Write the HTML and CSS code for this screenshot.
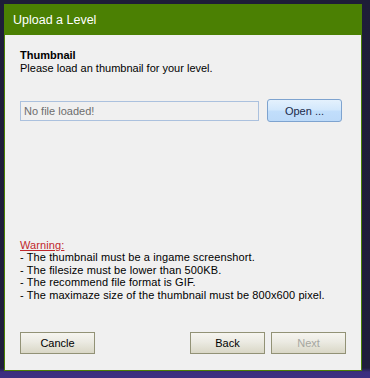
FILE: index.html
```html
<!DOCTYPE html>
<html>
<head>
<meta charset="utf-8">
<link rel="stylesheet" href="styles.css">
</head>
<body>
<div class="window">
  <div class="titlebar">Upload a Level</div>
  <div class="content">
    <div class="heading">Thumbnail</div>
    <div class="desc">Please load an thumbnail for your level.</div>
    <div class="filerow">
      <div class="filebox">No file loaded!</div>
      <button class="open-btn">Open ...</button>
    </div>
    <div class="warning">
      <div class="warn-title">Warning:</div>
      <div>- The thumbnail must be a ingame screenshort.</div>
      <div>- The filesize must be lower than 500KB.</div>
      <div>- The recommend file format is GIF.</div>
      <div>- The maximaze size of the thumbnail must be 800x600 pixel.</div>
    </div>
    <div class="buttons">
      <button class="btn">Cancle</button>
      <div class="spacer"></div>
      <button class="btn">Back</button>
      <button class="btn disabled">Next</button>
    </div>
  </div>
</div>
</body>
</html>
```

FILE: styles.css
```css
html, body {
  margin: 0;
  padding: 0;
}
body {
  width: 370px;
  height: 378px;
  overflow: hidden;
  background: linear-gradient(to bottom, #1e1d38 0px, #1f1e3b 368px, #3b2e7e 372px, #3d2f82 378px);
  font-family: "Liberation Sans", Arial, sans-serif;
  font-size: 11px;
  color: #000;
}
.window {
  margin: 4px 0 0 4px;
  width: 356px;
  height: 365px;
  border: 1px solid #4b8003;
  background: #f0f0f0;
  display: flex;
  flex-direction: column;
}
.titlebar {
  height: 30px;
  background: #4b8003;
  color: #fff;
  font-size: 12.5px;
  line-height: 30px;
  padding-left: 8px;
  flex: none;
}
.content {
  flex: 1;
  display: flex;
  flex-direction: column;
  padding: 14px 15px 16px 15px;
  line-height: 13px;
}
.heading {
  font-weight: bold;
}
.filerow {
  display: flex;
  align-items: center;
  margin-top: 24px;
  gap: 8px;
  padding-right: 4px;
}
.filebox {
  flex: 1;
  height: 18px;
  border: 1px solid #abc1de;
  color: #6d6d6d;
  line-height: 18px;
  padding-left: 3px;
}
.open-btn {
  width: 75px;
  height: 23px;
  border: 1px solid #7ea3cf;
  border-radius: 3px;
  background: linear-gradient(to bottom, #e4f1fd 0%, #d3e8fc 45%, #c1defb 55%, #bcdaf9 100%);
  font-family: "Liberation Sans", Arial, sans-serif;
  font-size: 11px;
  color: #1a2a4a;
  padding: 0;
}
.warning {
  margin-top: auto;
  line-height: 12.5px;
  letter-spacing: 0.1px;
}
.warn-title {
  color: #c0282d;
  text-decoration: underline;
}
.buttons {
  display: flex;
  gap: 6px;
  margin-top: 31px;
}
.spacer {
  flex: 1;
}
.btn {
  width: 75px;
  height: 22px;
  border: 1px solid #929276;
  background: linear-gradient(to bottom, #f6f5f0 0%, #ebeae2 45%, #d9d7c6 100%);
  font-family: "Liberation Sans", Arial, sans-serif;
  font-size: 11px;
  color: #000;
  padding: 0;
}
.btn.disabled {
  color: #a6a6a0;
}
```
